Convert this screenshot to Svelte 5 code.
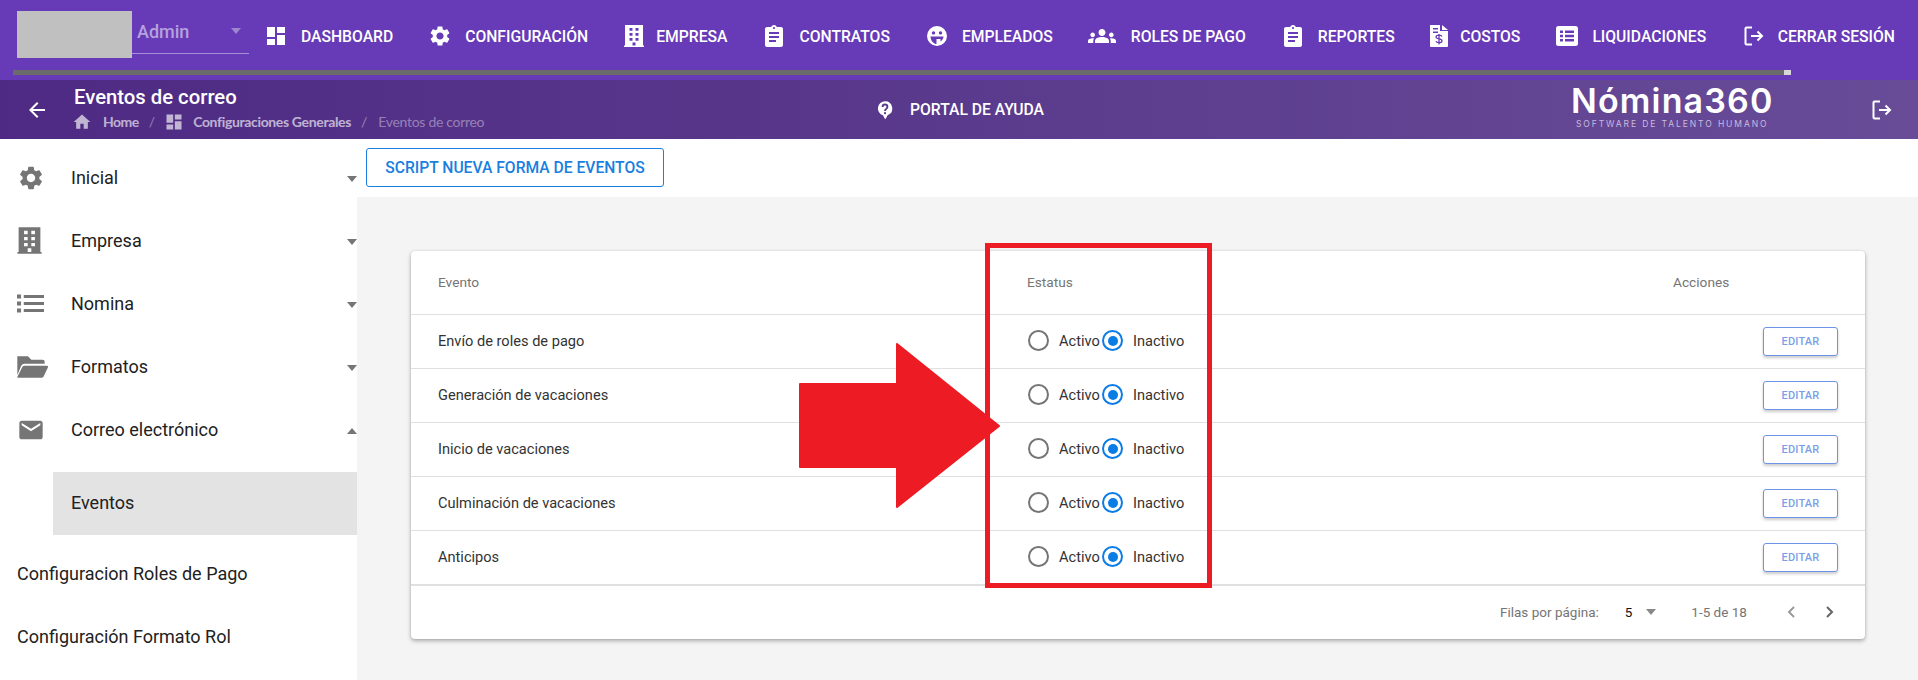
<script>
  const P = {
    dash: 'M3 13h8V3H3v10zm0 8h8v-6H3v6zm10 0h8V11h-8v10zm0-18v6h8V3h-8z',
    gear: 'M19.14 12.94c.04-.3.06-.61.06-.94 0-.32-.02-.64-.07-.94l2.03-1.58c.18-.14.23-.41.12-.61l-1.92-3.32c-.12-.22-.37-.29-.59-.22l-2.39.96c-.5-.38-1.03-.7-1.62-.94l-.36-2.54c-.04-.24-.24-.41-.48-.41h-3.84c-.24 0-.43.17-.47.41l-.36 2.54c-.59.24-1.13.57-1.62.94l-2.39-.96c-.22-.08-.47 0-.59.22L2.74 8.87c-.12.21-.08.47.12.61l2.03 1.58c-.05.3-.09.63-.09.94s.02.64.07.94l-2.03 1.58c-.18.14-.23.41-.12.61l1.92 3.32c.12.22.37.29.59.22l2.39-.96c.5.38 1.03.7 1.62.94l.36 2.54c.05.24.24.41.48.41h3.84c.24 0 .44-.17.47-.41l.36-2.54c.59-.24 1.13-.56 1.62-.94l2.39.96c.22.08.47 0 .59-.22l1.92-3.32c.12-.22.07-.47-.12-.61l-2.01-1.58zM12 15.6c-1.98 0-3.6-1.62-3.6-3.6s1.62-3.6 3.6-3.6 3.6 1.62 3.6 3.6-1.62 3.6-3.6 3.6z',
    build: 'M3 1h18v20.500h1V23H2v-1.500h1V1zM7.500 4v2.800h3V4h-3zm6 0v2.800h3V4h-3zM7.500 9v2.800h3V9h-3zm6 0v2.800h3V9h-3zM7.500 14v2.800h3V14h-3zm6 0v2.800h3V14h-3zM10.500 18.500v3h3v-3h-3z',
    clip: 'M19 3h-4.18C14.4 1.84 13.3 1 12 1c-1.3 0-2.4.84-2.82 2H5c-1.1 0-2 .9-2 2v16c0 1.1.9 2 2 2h14c1.1 0 2-.9 2-2V5c0-1.1-.9-2-2-2zm-7 0c.55 0 1 .45 1 1s-.45 1-1 1-1-.45-1-1 .45-1 1-1zm2 15H7v-2h7v2zm3-4H7v-2h10v2zm0-4H7V8h10v2z',
    face: 'M12 2a10 10 0 1 0 0 20 10 10 0 0 0 0-20zM8.500 7.200a1.700 1.700 0 1 1 0 3.400 1.700 1.700 0 0 1 0-3.400zm7 0a1.700 1.700 0 1 1 0 3.400 1.700 1.700 0 0 1 0-3.400zM5.500 12.500h13c0 2-1.200 3.800-3 4.900V15h-4v4.400c0 .4-.2.6-.5.600-3-.5-5.500-3.900-5.500-7.500z',
    group: 'M12 12.75c1.63 0 3.07.39 4.24.9 1.08.48 1.76 1.56 1.76 2.73V18H6v-1.61c0-1.18.68-2.26 1.76-2.73 1.17-.52 2.61-.91 4.24-.91zM4 13c1.1 0 2-.9 2-2s-.9-2-2-2-2 .9-2 2 .9 2 2 2zm1.13 1.1c-.37-.06-.74-.1-1.13-.1-.99 0-1.93.21-2.78.58C.48 14.9 0 15.62 0 16.43V18h4.5v-1.61c0-.83.23-1.61.63-2.29zM20 13c1.1 0 2-.9 2-2s-.9-2-2-2-2 .9-2 2 .9 2 2 2zm4 3.43c0-.81-.48-1.53-1.22-1.85-.85-.37-1.79-.58-2.78-.58-.39 0-.76.04-1.13.1.4.68.63 1.46.63 2.29V18H24v-1.57zM12 6c1.66 0 3 1.34 3 3s-1.34 3-3 3-3-1.34-3-3 1.34-3 3-3z',
    file: 'M3 1h10v6h8v15a1 1 0 0 1-1 1H4a1 1 0 0 1-1-1V1zm12 0l6 5h-6V1zM6 4v1.600h5V4H6zm0 3.400V9h5V7.400H6z',
    list: 'M3.500 2h17A2.500 2.500 0 0 1 23 4.500v15a2.500 2.500 0 0 1-2.500 2.500h-17A2.500 2.500 0 0 1 1 19.500v-15A2.500 2.500 0 0 1 3.500 2zM5 6.500V9h3V6.500H5zm5 0V9h9V6.500h-9zM5 10.800v2.500h3v-2.500H5zm5 0v2.500h9v-2.500h-9zM5 15v2.500h3V15H5zm5 0v2.500h9V15h-9z',
    home: 'M10 20v-6h4v6h5v-8h3L12 3 2 12h3v8z',
    back: 'M20 11H7.830l5.590-5.590L12 4l-8 8 8 8 1.410-1.410L7.830 13H20v-2z',
    bars: 'M0 4h3.600v3.600H0zM0 10.200h3.600v3.600H0zM0 16.400h3.600V20H0zM6 4.400h18v2.800H6zM6 10.600h18v2.800H6zM6 16.800h18v2.800H6z',
    folder: 'M1 4h8l2.500 2.500H20a1.500 1.500 0 0 1 1.500 1.500v1.500H6.500A3 3 0 0 0 3.800 11.300L1 18V4zm5.500 7H23a1 1 0 0 1 .9 1.400L20.800 19a1.500 1.500 0 0 1-1.400 1H1.500a.5.500 0 0 1-.45-.7l3.700-7.300A2 2 0 0 1 6.500 11z',
    mail: 'M20 4H4c-1.100 0-1.990.9-1.990 2L2 18c0 1.100.9 2 2 2h16c1.100 0 2-.9 2-2V6c0-1.100-.9-2-2-2zm0 4l-8 5-8-5V6l8 5 8-5v2z'
  };
  const nav = [
    { t: 'DASHBOARD', i: P.dash },
    { t: 'CONFIGURACIÓN', i: P.gear },
    { t: 'EMPRESA', i: P.build },
    { t: 'CONTRATOS', i: P.clip },
    { t: 'EMPLEADOS', i: P.face },
    { t: 'ROLES DE PAGO', i: P.group, w: 28 },
    { t: 'REPORTES', i: P.clip },
    { t: 'COSTOS', i: P.file, dollar: true },
    { t: 'LIQUIDACIONES', i: P.list },
    { t: 'CERRAR SESIÓN', exit: true }
  ];
  const side = [
    { t: 'Inicial', i: P.gear, c: 'ic-gear' },
    { t: 'Empresa', i: P.build, c: 'ic-build' },
    { t: 'Nomina', i: P.bars, c: 'ic-bars' },
    { t: 'Formatos', i: P.folder, c: 'ic-folder' },
    { t: 'Correo electrónico', i: P.mail, c: 'ic-mail', open: true }
  ];
  const rows = ['Envío de roles de pago', 'Generación de vacaciones', 'Inicio de vacaciones', 'Culminación de vacaciones', 'Anticipos'];
</script>

{#snippet exitIcon()}
  <svg class="ic exit" viewBox="0 0 20 20" fill="none" stroke="currentColor" stroke-width="2"><path d="M8 1.500H2.500a1 1 0 0 0-1 1v15a1 1 0 0 0 1 1H8M7 10h11M13.500 5.500L18 10l-4.500 4.500" /></svg>
{/snippet}

<div class="page">
  <header class="top">
    <div class="toprow">
      <div class="ph"></div>
      <div class="select"><span>Admin</span><i class="caret"></i></div>
      <nav>
        {#each nav as n}
          <a class="item">
            {#if n.exit}
              {@render exitIcon()}
            {:else}
              <svg class="ic" class:wide={n.w} viewBox="0 0 24 24"><path fill="currentColor" fill-rule="evenodd" d={n.i} />{#if n.dollar}<path class="dollar" d="M15 12.500c-.5-1-1.500-1.300-3-1.300-1.700 0-3 .7-3 1.900 0 2.600 6 1 6 3.600 0 1.200-1.300 1.900-3 1.900-1.500 0-2.600-.4-3.100-1.400M12 10v10.500" />{/if}</svg>
            {/if}
            <span>{n.t}</span>
          </a>
        {/each}
      </nav>
    </div>
    <div class="track"><div class="fill"></div><div class="thumb"></div></div>
  </header>

  <div class="sub">
    <svg class="back" viewBox="0 0 24 24"><path fill="currentColor" d={P.back} /></svg>
    <div class="titles">
      <div class="title">Eventos de correo</div>
      <div class="crumbs">
        <svg class="cr-ic" viewBox="0 0 24 24"><path fill="currentColor" d={P.home} /></svg>
        <b class="c-home">Home</b>
        <em>/</em>
        <svg class="cr-ic" viewBox="0 0 24 24"><path fill="currentColor" d={P.dash} /></svg>
        <b class="c-conf">Configuraciones Generales</b>
        <em>/</em>
        <span>Eventos de correo</span>
      </div>
    </div>
    <div class="portal">
      <svg class="help" viewBox="0 0 20 24"><path fill="currentColor" fill-rule="evenodd" d="M10 1a9 9 0 0 1 3.500 17.300L10.800 23c-.3.500-.8.500-1 0l-2.300-4.400A9 9 0 0 1 10 1z" /><path class="q" d="M7 8.200c0-4 6-4 6 0 0 2.400-3 2.400-3 5" /><circle class="qd" cx="10" cy="16" r="1.400" /></svg>
      <span>PORTAL DE AYUDA</span>
    </div>
    <div class="logo">
      <div class="l1">Nómina360</div>
      <div class="l2">SOFTWARE DE TALENTO HUMANO</div>
    </div>
    <span class="subexit">{@render exitIcon()}</span>
  </div>

  <div class="body">
    <aside>
      {#each side as s}
        <div class="sitem">
          <span class="sic"><svg class={s.c} viewBox="0 0 24 24"><path fill="currentColor" fill-rule="evenodd" d={s.i} /></svg></span>
          <span class="slabel">{s.t}</span>
          <i class="scaret" class:up={s.open}></i>
        </div>
      {/each}
      <div class="sactive">Eventos</div>
      <div class="splain">Configuracion Roles de Pago</div>
      <div class="splain">Configuración Formato Rol</div>
    </aside>

    <main>
      <div class="tools"><button class="script">SCRIPT NUEVA FORMA DE EVENTOS</button></div>
      <div class="canvas">
        <section class="card">
          <div class="row head">
            <div>Evento</div>
            <div>Estatus</div>
            <div>Acciones</div>
          </div>
          {#each rows as r}
            <div class="row">
              <div class="cell">{r}</div>
              <div class="status">
                <i class="radio"></i><span class="ra cell">Activo</span>
                <i class="radio on"></i><span class="cell">Inactivo</span>
              </div>
              <div class="act"><button class="edit">EDITAR</button></div>
            </div>
          {/each}
          <div class="foot">
            <span>Filas por página:</span>
            <b>5</b>
            <i class="pcaret"></i>
            <span class="range">1-5 de 18</span>
            <svg class="chev off" viewBox="0 0 10 14"><path d="M8 2L3 7l5 5" /></svg>
            <svg class="chev" viewBox="0 0 10 14"><path d="M2 2l5 5-5 5" /></svg>
          </div>
        </section>
      </div>
    </main>
  </div>

  <div class="redbox"></div>
  <svg class="arrow" viewBox="0 0 201 165"><path d="M1 41h97V1l102 82-102 81v-40H1z" fill="#ed1c24" stroke="#ed1c24" stroke-width="2" stroke-linejoin="round" /></svg>
</div>

<style>
  :global(body) { margin: 0; background: #fff; }
  .page { position: relative; width: 1918px; height: 680px; overflow: hidden; font-family: Roboto, "Liberation Sans", sans-serif; color: #212121; }

  .top { height: 80px; background: #673ab7; color: #fff; box-sizing: border-box; }
  .toprow { display: flex; height: 70px; padding-left: 17px; box-sizing: border-box; }
  .ph { width: 115px; height: 47px; margin-top: 11px; background: #c0c0c0; flex: none; }
  .select { flex: none; width: 117px; height: 40px; padding-bottom: 2px; margin-top: 11px; border-bottom: 1px solid #a58fd6; display: flex; align-items: center; justify-content: space-between; font-size: 18px; font-weight: 500; color: #b5a2dc; }
  .select span { margin-left: 5px; }
  .caret { width: 0; height: 0; border: 5.500px solid transparent; border-top: 6px solid #9d86cf; border-bottom: 0; margin-right: 8px; }
  nav { display: flex; gap: 35px; margin-left: 15px; padding-top: 24px; height: 24px; flex: none; }
  .item { display: flex; align-items: center; gap: 13px; font-size: 15.700px; font-weight: 500; white-space: nowrap; height: 24px; }
  .item:nth-child(3) { margin-left: -1px; gap: 10px; }
  .item:nth-child(6) { gap: 15px; }
  .item:nth-child(8) { margin-left: -3px; gap: 9.500px; }
  .item:nth-child(10) { margin-left: 2.500px; gap: 14px; }
  .ic { width: 24px; height: 24px; flex: none; }
  .ic.wide { width: 28px; height: 28px; }
  .ic.exit { width: 20px; height: 20px; }
  .dollar { fill: none; stroke: #673ab7; stroke-width: 1.300; }
  .track { display: flex; height: 5px; margin: 0 127px 0 13px; }
  .fill { flex: 1; background: #6b6b6b; }
  .thumb { width: 7px; background: #d8d8d8; }

  .sub { height: 59px; display: flex; align-items: center; color: #fff; background: linear-gradient(90deg, #4e2a84 0%, #5a3a8c 50%, #684c98 100%); }
  .back { width: 24px; height: 24px; margin-left: 25px; flex: none; }
  .titles { flex: 0 0 803px; margin-left: 25px; }
  .title { font-size: 20.300px; font-weight: 500; line-height: 24px; margin-top: -3px; }
  .crumbs { display: flex; align-items: center; height: 20px; margin-top: 3px; font-family: Lato, sans-serif; font-size: 14px; color: rgba(255, 255, 255, .65); white-space: nowrap; }
  .crumbs b { letter-spacing: -.35px; font-weight: 700; }
  .crumbs .c-home { margin-left: 7px; letter-spacing: -.5px; }
  .crumbs .c-conf { margin-left: 5px; }
  .crumbs em { font-style: normal; margin: 0 11px 0 10px; color: rgba(255, 255, 255, .4); font-weight: 400; }
  .crumbs span { color: rgba(255, 255, 255, .4); letter-spacing: -.3px; }
  .cr-ic { width: 20px; height: 20px; margin: 0 4px 0 -2px; flex: none; }
  .portal { flex: 0 0 696px; display: flex; align-items: center; gap: 17px; font-size: 15.700px; font-weight: 500; }
  .help { width: 16px; height: 20px; flex: none; }
  .q { fill: none; stroke: #5a3a8c; stroke-width: 2.400; }
  .qd { fill: #5a3a8c; }
  .logo { flex: 0 0 299px; color: #fff; margin-top: -6px; }
  .l1 { font-family: Inter, sans-serif; font-weight: 600; font-size: 34px; line-height: 34px; letter-spacing: 1.150px; margin-left: -2px; }
  .l2 { font-family: Inter, sans-serif; font-size: 8.500px; letter-spacing: 1.900px; line-height: 10px; color: #c9badf; margin-left: 3px; margin-top: 1px; }
  .subexit { display: flex; color: #fff; }

  .body { display: flex; height: 541px; }
  aside { width: 357px; flex: none; padding-top: 7px; box-sizing: border-box; }
  .sitem { height: 63px; display: flex; align-items: center; position: relative; }
  .sitem:nth-child(5) { margin-bottom: 11px; }
  .sic { width: 71px; flex: none; display: flex; color: #757575; }
  .sic svg { display: block; }
  .ic-gear { width: 28px; height: 28px; margin-left: 17px; }
  .ic-build { width: 29px; height: 29px; margin-left: 14.500px; }
  .ic-bars { width: 27px; height: 27px; margin-left: 17px; }
  .ic-folder { width: 32px; height: 32px; margin-left: 16px; }
  .ic-mail { width: 28px; height: 28px; margin-left: 17px; }
  .slabel, .sactive, .splain { font-size: 18px; }
  .scaret { position: absolute; right: 0; top: 30px; width: 0; height: 0; border: 5.500px solid transparent; border-top: 6px solid #757575; border-bottom: 0; }
  .scaret.up { border-top: 0; border-bottom: 6px solid #757575; }
  .sactive { margin-left: 53px; margin-bottom: 7px; height: 61px; padding-bottom: 2px; background: #e3e3e3; display: flex; align-items: center; padding-left: 18px; }
  .splain { height: 63px; display: flex; align-items: center; padding-left: 17px; }

  main { flex: 1; display: flex; flex-direction: column; min-width: 0; }
  .tools { height: 58px; background: #fff; padding: 9px 0 0 9px; box-sizing: border-box; }
  .script { display: block; width: 298px; height: 39px; padding: 0; background: #fff; border: 1px solid #1a7fe0; border-radius: 3px; color: #1a7fe0; font: 500 15.650px Roboto, sans-serif; }
  .canvas { flex: 1; background: #f4f4f4; padding: 54px 0 0 54px; }
  .card { width: 1454px; height: 388px; background: #fff; border-radius: 4px; box-shadow: 0 2px 4px rgba(0, 0, 0, .3), 0 0 2px rgba(0, 0, 0, .12); }
  .row { display: grid; grid-template-columns: 589px 646px 1fr; align-items: center; height: 53px; padding: 0 27px; border-top: 1px solid #e0e0e0; font-size: 14px; color: #333; }
  .cell { font-size: 14.600px; margin-top: -2px; }
  .row.head { height: 63px; border-top: 0; color: #757575; font-size: 13.700px; padding-bottom: 2px; box-sizing: border-box; }
  .status { display: flex; align-items: center; }
  .radio { box-sizing: border-box; width: 21px; height: 21px; border: 2px solid #757575; border-radius: 50%; margin: -2px 10px 0 1px; position: relative; flex: none; }
  .radio.on { border-color: #0a7ce6; margin-left: 0; }
  .radio.on::after { content: ""; position: absolute; left: 3.500px; top: 3.500px; width: 10px; height: 10px; border-radius: 50%; background: #0a7ce6; }
  .ra { width: 43px; }
  .act { display: flex; justify-content: flex-end; }
  .edit { width: 75px; height: 29px; padding: 0; background: #fff; border: 1px solid #6e94e8; border-radius: 3px; color: #7a9fe8; font: 500 11px Roboto, sans-serif; letter-spacing: .2px; box-shadow: 0 2px 3px rgba(0, 0, 0, .2); }
  .foot { border-top: 2px solid #e0e0e0; height: 51px; padding-bottom: 2px; display: flex; align-items: center; padding-left: 1089px; font-size: 13.500px; color: #757575; }
  .foot b { font-weight: 400; color: #111; margin-left: 26px; }
  .pcaret { width: 0; height: 0; border: 5.500px solid transparent; border-top: 6px solid #888; border-bottom: 0; margin-left: 14px; }
  .range { margin-left: 35px; }
  .chev { width: 10px; height: 14px; fill: none; stroke: #666; stroke-width: 2; margin-left: 29px; }
  .chev.off { stroke: #999; margin-left: 39px; }

  .redbox { position: absolute; left: 985px; top: 243px; width: 227px; height: 345px; box-sizing: border-box; border: 5px solid #ed1c24; }
  .arrow { position: absolute; left: 799px; top: 343px; width: 201px; height: 165px; }
</style>
